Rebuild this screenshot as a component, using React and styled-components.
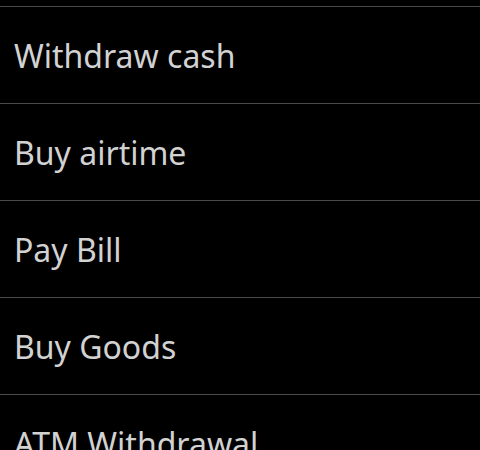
import React from 'react';
import styled, { createGlobalStyle } from 'styled-components';

const GlobalStyle = createGlobalStyle`
  html, body {
    margin: 0;
    padding: 0;
    background: #000;
    overflow: hidden;
  }
`;

const Screen = styled.div`
  width: 480px;
  height: 450px;
  background: #000;
  padding-top: 6px;
  box-sizing: border-box;
  overflow: hidden;
  font-family: "Noto Sans", "Open Sans", "DejaVu Sans", sans-serif;
`;

const Menu = styled.ul`
  list-style: none;
  margin: 0;
  padding: 0;
`;

const Item = styled.li`
  display: flex;
  align-items: center;
  height: 96px;
  border-top: 1px solid #4a4a4a;
  padding-left: 14px;
  color: #d2d2d2;
  font-size: 32px;
  white-space: nowrap;
`;

const items = ['Withdraw cash', 'Buy airtime', 'Pay Bill', 'Buy Goods', 'ATM Withdrawal'];

function App() {
    return (
      <Screen>
        <GlobalStyle />
        <Menu>
          {items.map((label) => (
            <Item key={label}>{label}</Item>
          ))}
        </Menu>
      </Screen>
    )
}

export default App
